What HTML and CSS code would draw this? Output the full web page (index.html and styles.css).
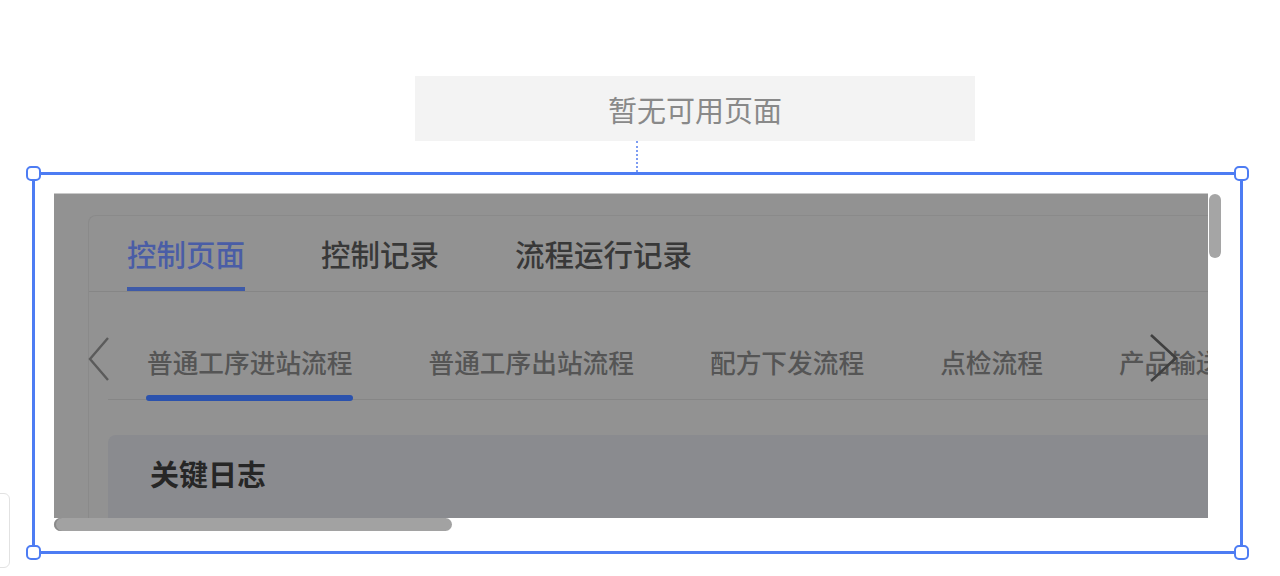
FILE: index.html
```html
<!DOCTYPE html>
<html lang="zh-CN">
<head>
<meta charset="UTF-8">
<meta name="viewport" content="width=device-width, initial-scale=1.0">
<title>页面预览</title>
<link rel="stylesheet" href="styles.css">
</head>
<body>

<div class="canvas">
  <div class="empty-tip">暂无可用页面</div>
  <div class="link-line"></div>

  <div class="frame">
    <span class="handle tl"></span>
    <span class="handle tr"></span>
    <span class="handle bl"></span>
    <span class="handle br"></span>

    <div class="scroll-area">
      <div class="viewport">
        <div class="card">
          <div class="tabs">
            <div class="tab active">控制页面</div>
            <div class="tab">控制记录</div>
            <div class="tab">流程运行记录</div>
          </div>

          <div class="subnav">
            <svg class="arrow-left" width="24" height="46" viewBox="0 0 24 46">
              <path d="M21 2 L3 23 L21 44" fill="none" stroke="#5b5b5b" stroke-width="2.4"/>
            </svg>
            <div class="subtabs">
              <div class="subtab active">普通工序进站流程</div>
              <div class="subtab">普通工序出站流程</div>
              <div class="subtab">配方下发流程</div>
              <div class="subtab">点检流程</div>
              <div class="subtab">产品输送流程</div>
            </div>
            <svg class="arrow-right" width="32" height="50" viewBox="0 0 32 50">
              <path d="M3 2 L28 25 L3 48" fill="none" stroke="#404040" stroke-width="2.6"/>
            </svg>
          </div>

          <div class="log-head">关键日志</div>
        </div>
      </div>
      <div class="vscroll"><div class="thumb"></div></div>
    </div>
    <div class="hscroll"><div class="thumb"></div></div>
  </div>
</div>

<div class="side-box"></div>

</body>
</html>
```
FILE: styles.css
```css
body, html {
  margin: 0;
  height: 100%;
  background: #fff;
  font-family: 'Noto Sans CJK SC', 'Noto Sans', sans-serif;
  overflow: hidden;
}

.canvas {
  padding-top: 76px;
}

.empty-tip {
  margin-left: 415px;
  width: 560px;
  height: 65px;
  background-color: #f3f3f3;
  color: #898989;
  font-size: 29px;
  display: flex;
  align-items: center;
  justify-content: center;
}

.link-line {
  margin-left: 636px;
  width: 0;
  height: 31px;
  border-left: 2px dotted #7d9cf2;
}

.frame {
  position: relative;
  margin-left: 32px;
  width: 1211px;
  height: 382px;
  box-sizing: border-box;
  border: 3px solid #4d7cf3;
  padding: 18px 19px 19px 19px;
}

.handle {
  position: absolute;
  width: 15px;
  height: 15px;
  box-sizing: border-box;
  border: 2px solid #4d7cf3;
  border-radius: 5px;
  background: #fff;
}
.handle.tl { top: -9px; left: -9px; }
.handle.tr { top: -9px; right: -9px; }
.handle.bl { bottom: -9px; left: -9px; }
.handle.br { bottom: -9px; right: -9px; }

.scroll-area {
  display: flex;
}

.viewport {
  width: 1154px;
  height: 325px;
  overflow: hidden;
  background-color: #929292;
  box-shadow: inset 0 1px 0 #c9c9c9;
}

.vscroll {
  width: 13px;
  padding-top: 1px;
}

.vscroll .thumb {
  margin-left: 1px;
  width: 12px;
  height: 64px;
  border-radius: 6px;
  background-color: #a5a5a5;
}

.hscroll {
  height: 14px;
}

.hscroll .thumb {
  width: 398px;
  height: 13px;
  border-radius: 7px;
  background-color: #a2a2a2;
  box-shadow: inset 2px 0 0 #8a8a8a;
}

.card {
  margin-left: 34px;
  margin-top: 22px;
  width: 1200px;
  border-top: 1px solid #8a8a8a;
  border-left: 1px solid #8a8a8a;
  border-top-left-radius: 8px;
}

.tabs {
  display: flex;
  gap: 76px;
  padding-left: 38px;
  border-bottom: 1px solid #868686;
}

.tab {
  font-size: 29.5px;
  line-height: 29px;
  font-weight: 500;
  padding-top: 23px;
  padding-bottom: 19px;
  color: #383838;
  border-bottom: 4px solid transparent;
}

.tab.active {
  color: #4a5da6;
  border-bottom-color: #3e5aa8;
}

.subnav {
  position: relative;
  display: flex;
  align-items: flex-start;
}

.arrow-left {
  flex: none;
  margin-top: 44px;
  margin-left: -2px;
  margin-right: -3px;
  width: 24px;
}

.subtabs {
  flex: 1;
  display: flex;
  gap: 76px;
  padding-left: 39px;
  border-bottom: 1px solid #868686;
  white-space: nowrap;
}

.subtab {
  position: relative;
  font-size: 25.7px;
  line-height: 26px;
  font-weight: 500;
  padding-top: 57px;
  padding-bottom: 24px;
  color: #555;
}

.subtab.active::after {
  content: "";
  position: absolute;
  left: -1px;
  right: 0;
  bottom: -2px;
  height: 6px;
  border-radius: 3px;
  background-color: #2b52ad;
}

.arrow-right {
  position: absolute;
  left: 1059px;
  top: 41px;
}

.log-head {
  margin-top: 35px;
  margin-left: 19px;
  height: 100px;
  box-sizing: border-box;
  padding-top: 24px;
  padding-left: 42px;
  background-color: #8a8b8f;
  border-top-left-radius: 8px;
  font-size: 29px;
  line-height: 29px;
  font-weight: 700;
  color: #262626;
}

.side-box {
  position: absolute;
  left: -12px;
  top: 493px;
  width: 20px;
  height: 73px;
  border: 1px solid #e2e2e2;
  border-radius: 6px;
  background: #fff;
}
```
